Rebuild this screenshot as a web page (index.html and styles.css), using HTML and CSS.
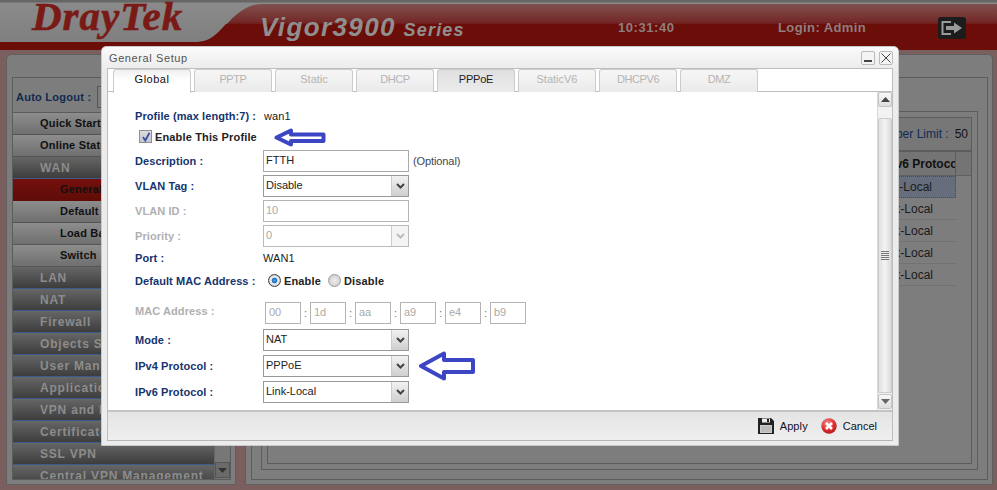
FILE: index.html
```html
<!DOCTYPE html>
<html lang="en">
<head>
<meta charset="utf-8">
<title>DrayTek Vigor3900 Series</title>
<link rel="stylesheet" href="styles.css">
</head>
<body>
<div class="page">
  <header class="header">
    <svg class="header-bg" width="997" height="50" viewBox="0 0 997 50" aria-hidden="true">
      <defs>
        <linearGradient id="red" x1="0" y1="0" x2="0" y2="1">
          <stop offset="0" stop-color="#80504f"/>
          <stop offset=".38" stop-color="#742a28"/>
          <stop offset=".48" stop-color="#6b0e0a"/>
          <stop offset="1" stop-color="#6b0e0a"/>
        </linearGradient>
      </defs>
      <path d="M0 42 H198 C222 42 232 4 262 4 H997 V50 H0 Z" fill="url(#red)"/>
      <path d="M0 42 H198 C210 42 218 33 226 24 H997 V50 H0 Z" fill="#6b0e0a"/>
    </svg>
    <div class="logo">DrayTek</div>
    <div class="model">Vigor3900 <span class="model-series">Series</span></div>
    <div class="clock">10:31:40</div>
    <div class="login">Login: Admin</div>
    <div class="logout">
      <svg width="28" height="22" viewBox="0 0 28 22" aria-hidden="true">
        <rect x="0" y="0" width="28" height="22" rx="3" fill="#1c1c1c"/>
        <path d="M13 5 H4.500 V17 H13" fill="none" stroke="#9a9a9a" stroke-width="2"/>
        <path d="M8 9 H16 V5.500 L24 11 L16 16.500 V13 H8 Z" fill="#9a9a9a"/>
      </svg>
    </div>
  </header>

  <main class="main">
    <aside class="panel side-panel">
      <div class="panel-inner side-inner">
        <div class="auto-logout">
          <span class="auto-label">Auto Logout :</span>
          <span class="auto-select">OFF</span>
        </div>
        <div class="menu-wrap">
          <nav class="menu">
            <div class="menu-item light">Quick Start Wizard</div>
            <div class="menu-item light">Online Status</div>
            <div class="menu-item dark">WAN</div>
            <div class="menu-item sub active">General Setup</div>
            <div class="menu-item sub light">Default Route</div>
            <div class="menu-item sub light">Load Balance</div>
            <div class="menu-item sub light">Switch</div>
            <div class="menu-item dark">LAN</div>
            <div class="menu-item dark">NAT</div>
            <div class="menu-item dark">Firewall</div>
            <div class="menu-item dark">Objects Setting</div>
            <div class="menu-item dark">User Management</div>
            <div class="menu-item dark">Applications</div>
            <div class="menu-item dark">VPN and Remote</div>
            <div class="menu-item dark">Certificate</div>
            <div class="menu-item dark">SSL VPN</div>
            <div class="menu-item dark">Central VPN Management</div>
          </nav>
          <div class="menu-scroll">
            <span class="menu-scroll-btn">
              <svg width="9" height="5" viewBox="0 0 9 5" aria-hidden="true"><path d="M0 0 H9 L4.500 5 Z" fill="#333"/></svg>
            </span>
          </div>
        </div>
      </div>
    </aside>

    <section class="panel content-panel">
      <div class="panel-inner content-inner">
        <div class="frame-a">
          <div class="frame-b">
            <div class="toolbar"><span class="limit-label">Member Limit :</span><span class="limit-value">50</span></div>
            <div class="table-head">
              <div class="head-cell"><span>IPv6 Protocol</span></div>
              <div class="head-end"></div>
            </div>
            <div class="table-row selected"><span>Link-Local</span></div>
            <div class="table-row"><span>Link-Local</span></div>
            <div class="table-row"><span>Link-Local</span></div>
            <div class="table-row"><span>Link-Local</span></div>
            <div class="table-row"><span>Link-Local</span></div>
          </div>
        </div>
      </div>
    </section>
  </main>

  <div class="dialog">
    <div class="title-bar">
      <span class="title">General Setup</span>
      <span class="win-btns">
        <span class="win-btn"><svg width="10" height="10" viewBox="0 0 10 10" aria-hidden="true"><rect x="1" y="7" width="8" height="2" fill="#444"/></svg></span>
        <span class="win-btn"><svg width="12" height="12" viewBox="0 0 12 12" aria-hidden="true"><path d="M1.500 1.500 L10.500 10.500 M10.500 1.500 L1.500 10.500" stroke="#444" stroke-width="1"/></svg></span>
      </span>
    </div>
    <div class="dialog-frame">
      <div class="tabs">
        <div class="tab tab-active">Global</div>
        <div class="tab tab-caps">PPTP</div>
        <div class="tab">Static</div>
        <div class="tab tab-caps">DHCP</div>
        <div class="tab tab-on">PPPoE</div>
        <div class="tab">StaticV6</div>
        <div class="tab tab-caps">DHCPV6</div>
        <div class="tab tab-caps">DMZ</div>
      </div>
      <div class="dialog-body">
        <form class="form">
          <div class="row row-profile"><span class="label">Profile (max length:7) :</span><span class="value value-name">wan1</span></div>
          <div class="row row-enable">
            <span class="check"><svg width="10" height="10" viewBox="0 0 10 10" aria-hidden="true"><path d="M2 5 L4.300 8.500 L8.500 .8" fill="none" stroke="#3c4f9c" stroke-width="1.800"/></svg></span>
            <span class="strong">Enable This Profile</span>
            <svg class="arrow arrow-top" width="52" height="19" viewBox="0 0 52 19" aria-hidden="true"><path d="M2.500 9.500 L17 2.500 V6.500 H49.500 V13 H17 V16.500 Z" fill="#fff" stroke="#3c46c4" stroke-width="4" stroke-linejoin="round"/></svg>
          </div>
          <div class="row"><span class="label">Description :</span><span class="input">FTTH</span><span class="hint">(Optional)</span></div>
          <div class="row"><span class="label">VLAN Tag :</span><span class="select"><span class="select-text">Disable</span><span class="select-btn"><svg width="9" height="6" viewBox="0 0 9 6" aria-hidden="true"><path d="M1 1 L4.500 4.500 L8 1" fill="none" stroke="#444" stroke-width="2"/></svg></span></span></div>
          <div class="row"><span class="label off">VLAN ID :</span><span class="input input-off">10</span></div>
          <div class="row"><span class="label off">Priority :</span><span class="select select-off"><span class="select-text">0</span><span class="select-btn"><svg width="9" height="6" viewBox="0 0 9 6" aria-hidden="true"><path d="M1 1 L4.500 4.500 L8 1" fill="none" stroke="#bbb" stroke-width="2"/></svg></span></span></div>
          <div class="row row-port"><span class="label">Port :</span><span class="value">WAN1</span></div>
          <div class="row row-mac">
            <span class="label">Default MAC Address :</span>
            <span class="radio radio-on"></span><span class="strong radio-text">Enable</span>
            <span class="radio"></span><span class="strong">Disable</span>
          </div>
          <div class="row row-addr">
            <span class="label off">MAC Address :</span>
            <span class="octets">
              <span class="input input-off octet">00</span><span class="colon">:</span>
              <span class="input input-off octet">1d</span><span class="colon">:</span>
              <span class="input input-off octet">aa</span><span class="colon">:</span>
              <span class="input input-off octet">a9</span><span class="colon">:</span>
              <span class="input input-off octet">e4</span><span class="colon">:</span>
              <span class="input input-off octet">b9</span>
            </span>
          </div>
          <div class="row row-select"><span class="label">Mode :</span><span class="select"><span class="select-text">NAT</span><span class="select-btn"><svg width="9" height="6" viewBox="0 0 9 6" aria-hidden="true"><path d="M1 1 L4.500 4.500 L8 1" fill="none" stroke="#444" stroke-width="2"/></svg></span></span></div>
          <div class="row row-select">
            <span class="label">IPv4 Protocol :</span><span class="select"><span class="select-text">PPPoE</span><span class="select-btn"><svg width="9" height="6" viewBox="0 0 9 6" aria-hidden="true"><path d="M1 1 L4.500 4.500 L8 1" fill="none" stroke="#444" stroke-width="2"/></svg></span></span>
            <svg class="arrow arrow-mid" width="58" height="30" viewBox="0 0 58 30" aria-hidden="true"><path d="M3 15 L26 2.500 V9 H55 V21 H26 V27.500 Z" fill="#fff" stroke="#3c46c4" stroke-width="4" stroke-linejoin="round"/></svg>
          </div>
          <div class="row row-select"><span class="label">IPv6 Protocol :</span><span class="select"><span class="select-text">Link-Local</span><span class="select-btn"><svg width="9" height="6" viewBox="0 0 9 6" aria-hidden="true"><path d="M1 1 L4.500 4.500 L8 1" fill="none" stroke="#444" stroke-width="2"/></svg></span></span></div>
        </form>
        <div class="scrollbar">
          <span class="scroll-btn"><svg width="9" height="5" viewBox="0 0 9 5" aria-hidden="true"><path d="M0 5 H9 L4.500 0 Z" fill="#444"/></svg></span>
          <span class="scroll-thumb"><svg width="8" height="9" viewBox="0 0 8 9" aria-hidden="true"><path d="M0 .5 H8 M0 2.500 H8 M0 4.500 H8 M0 6.500 H8 M0 8.500 H8" stroke="#777"/></svg></span>
          <span class="scroll-btn"><svg width="9" height="5" viewBox="0 0 9 5" aria-hidden="true"><path d="M0 0 H9 L4.500 5 Z" fill="#666"/></svg></span>
        </div>
      </div>
      <div class="dialog-foot">
        <svg class="foot-icon" width="16" height="16" viewBox="0 0 16 16" aria-hidden="true">
          <path d="M0 0 H13 L16 3 V16 H0 Z" fill="#222"/>
          <rect x="4" y="0.500" width="8" height="4" fill="#eee"/>
          <rect x="9" y="1" width="2" height="3" fill="#222"/>
          <rect x="2" y="7" width="12" height="8" fill="#ccc"/>
          <path d="M3 9 H13 M3 11 H13 M3 13 H13" stroke="#aaa"/>
        </svg>
        <span class="foot-text foot-apply">Apply</span>
        <svg class="foot-icon" width="16" height="16" viewBox="0 0 16 16" aria-hidden="true">
          <defs><radialGradient id="cx" cx=".4" cy=".3" r=".8"><stop offset="0" stop-color="#f28a8a"/><stop offset=".6" stop-color="#d92b2b"/><stop offset="1" stop-color="#a81818"/></radialGradient></defs>
          <circle cx="8" cy="8" r="7.700" fill="url(#cx)"/>
          <path d="M5 5 L11 11 M11 5 L5 11" stroke="#fff" stroke-width="2.600"/>
        </svg>
        <span class="foot-text foot-cancel">Cancel</span>
      </div>
    </div>
  </div>
</div>
</body>
</html>
```
FILE: styles.css
```css
* { box-sizing: border-box; }
html, body { margin: 0; padding: 0; }
body {
  width: 997px;
  height: 490px;
  overflow: hidden;
  font-family: "Liberation Sans", Arial, sans-serif;
  font-size: 11px;
  background: #7b5e5e;
}
.page { position: relative; width: 997px; height: 490px; overflow: hidden; }

/* Header */
.header {
  position: relative;
  height: 50px;
  display: flex;
  background: linear-gradient(#666 0, #666 2px, #8a8a8a 3px, #7f7f7f 42px);
}
.header-bg { position: absolute; left: 0; top: 0; }
.logo {
  position: relative;
  margin-left: 32px;
  width: 228px;
  height: 32px;
  font: italic bold 41px/32px "Liberation Serif", serif;
  letter-spacing: 1px;
  -webkit-text-stroke: .6px #7a1a16;
  color: #7a1a16;
}
.model {
  position: relative;
  margin-top: 13px;
  width: 358px;
  font: italic bold 26px/28px "Liberation Sans", sans-serif;
  letter-spacing: 1.4px;
  color: #8f8f8f;
  white-space: nowrap;
}
.model-series { font-size: 18px; letter-spacing: 1.2px; margin-left: -1px; }
.clock, .login {
  position: relative;
  margin-top: 20px;
  font-weight: bold;
  font-size: 13px;
  line-height: 15px;
  color: #8d7f7f;
}
.clock { width: 160px; letter-spacing: .55px; }
.login { width: 160px; letter-spacing: .4px; }
.logout { position: relative; margin-top: 17px; height: 22px; }
.logout svg { display: block; }

/* Background panels */
.main { display: flex; height: 440px; padding: 4px 4px 5px 6px; gap: 9px; }
.panel {
  border: 1px solid #5f5f5f;
  border-radius: 5px 5px 0 0;
  background: #7d7d7d;
  padding: 22px 4px 4px 5px;
}
.side-panel { width: 230px; }
.content-panel { width: 748px; }
.panel-inner { height: 100%; border: 1px solid #5c5c5c; background: #7d7d7d; }
.side-inner { display: flex; flex-direction: column; }
.auto-logout { height: 35px; display: flex; align-items: center; padding: 4px 0 0 3px; border-bottom: 1px solid #5c5c5c; }
.auto-label { font-weight: bold; font-size: 11px; color: #112a50; letter-spacing: .25px; margin-right: 6px; }
.auto-select { border: 1px solid #555; padding: 2px 4px; width: 60px; height: 22px; }
.menu-wrap { display: flex; flex: 1; min-height: 0; overflow: hidden; }
.menu { width: 201px; flex: none; }
.menu-item {
  height: 22px;
  padding: 3px 0 0 27px;
  font-weight: bold;
  font-size: 12px;
  line-height: 15px;
  letter-spacing: .3px;
  white-space: nowrap;
}
.menu-item.sub { padding-left: 47px; }
.menu-item.light { background: linear-gradient(#8d8d8d, #6f6f6f); color: #111; border-bottom: 1px solid #555; font-size: 11px; letter-spacing: .2px; }
.menu-item.dark { background: linear-gradient(#666, #3d3d3d); color: #8c8c8c; border-bottom: 1px solid #3c5a8c; letter-spacing: .8px; padding-top: 4px; }
.menu-item.active { background: linear-gradient(#74100c, #5f0c08); color: #111; font-size: 11px; letter-spacing: .2px; }
.menu-scroll { flex: 1; background: #777; border-left: 1px solid #666; display: flex; flex-direction: column; justify-content: flex-end; }
.menu-scroll-btn { height: 16px; width: 15px; border: 1px solid #555; background: #6a6a6a; display: flex; align-items: center; justify-content: center; margin-bottom: 1px; }
.content-inner { padding: 33px 9px 9px 9px; }
.frame-a { height: 100%; border: 1px solid #5c5c5c; padding: 5px; }
.frame-b { height: 100%; border: 1px solid #5c5c5c; }
.toolbar {
  height: 34px;
  display: flex;
  justify-content: flex-end;
  align-items: center;
  gap: 6px;
  padding-right: 3px;
  border-bottom: 2px solid #5c5c5c;
  background: #777;
  color: #0f2a55;
  font-size: 12px;
}
.limit-value { color: #111; }
.table-head { display: flex; height: 24px; border-bottom: 1px solid #606060; background: #747474; }
.head-cell { flex: none; width: 688px; overflow: hidden; display: flex; justify-content: flex-end; align-items: center; border-right: 1px solid #5c5c5c; font: bold 12px "Liberation Sans", sans-serif; color: #111; white-space: nowrap; }
.head-cell span { margin-right: -6px; }
.head-end { flex: 1; }
.table-row { width: 688px; height: 22px; display: flex; justify-content: flex-end; align-items: center; padding-right: 23px; border-bottom: 1px solid #727272; font-size: 12px; color: #1a1a1a; }
.table-row.selected { background: #666d7c; border: 1px dotted #3f4a66; }

/* Dialog */
.dialog {
  position: absolute;
  left: 101px;
  top: 46px;
  width: 798px;
  height: 400px;
  padding: 0 5px 4px;
  border: 1px solid #c8c8c8;
  border-radius: 5px 5px 0 0;
  background: linear-gradient(#fafafa, #ececec 22px);
  display: flex;
  flex-direction: column;
}
.title-bar { height: 21px; flex: none; display: flex; justify-content: space-between; align-items: center; }
.title { margin-left: 2px; font-size: 11px; letter-spacing: .6px; color: #555; }
.win-btns { display: flex; gap: 4px; margin-top: 1px; }
.win-btn { width: 14px; height: 14px; border: 1px solid #bbb; border-radius: 2px; background: #f4f4f4; display: flex; align-items: center; justify-content: center; }
.dialog-frame { flex: 1; min-height: 0; display: flex; flex-direction: column; background: #fff; border: 1px solid #bdbdbd; border-bottom-color: #b5b5b5; }
.tabs { height: 23px; flex: none; display: flex; gap: 3px; padding-left: 5px; border-bottom: 1px solid #bdbdbd; }
.tab {
  width: 78px;
  height: 23px;
  padding-bottom: 5px;
  display: flex;
  align-items: center;
  justify-content: center;
  border: 1px solid #ccc;
  border-bottom: 0;
  border-radius: 3px 3px 0 0;
  background: linear-gradient(#f6f6f6, #eaeaea);
  color: #b4b4b4;
  font-size: 11px;
}
.tab-caps { letter-spacing: -.4px; }
.tab-active { height: 24px; padding-bottom: 6px; background: linear-gradient(#f0f0f0, #fff 10px); color: #111; position: relative; z-index: 1; letter-spacing: .5px; }
.tab-on { background: linear-gradient(#dfdfdf, #ececec); color: #222; letter-spacing: -.2px; }
.dialog-body { flex: 1; min-height: 0; display: flex; justify-content: space-between; }
.form { padding: 13px 0 0 27px; flex: 1; }
.row { height: 25px; display: flex; align-items: center; position: relative; white-space: nowrap; }
.row-profile { height: 22px; }
.row-enable { height: 19px; margin-bottom: 2px; padding-left: 4px; }
.row-port { height: 20px; }
.row-mac { height: 25px; margin-bottom: 2px; }
.row-addr { height: 32px; }
.row-select { height: 26px; }
.label { width: 128px; flex: none; color: #15346e; font-weight: bold; font-size: 11px; letter-spacing: .08px; }
.label.off { color: #b0b0b0; }
.value { color: #222; font-size: 11px; letter-spacing: .1px; }
.value-name { margin-left: 1px; }
.strong { font-weight: bold; font-size: 11px; color: #222; letter-spacing: .15px; }
.hint { margin-left: 4px; color: #445; letter-spacing: -.1px; }
.check { width: 13px; height: 13px; margin-right: 3px; border: 1px solid #8f8f8f; background: linear-gradient(#dcdcdc, #c4c8d4); display: flex; align-items: center; justify-content: center; }
.arrow { position: absolute; }
.arrow-top { left: 139px; top: 1px; }
.arrow-mid { left: 283px; top: -2px; }
.input { width: 146px; height: 22px; padding: 0 2px 2px; border: 1px solid #aaa; color: #222; font-size: 11px; display: flex; align-items: center; }
.input-off { color: #aaa; border-color: #b4b4b4; }
.select { width: 146px; height: 22px; display: flex; border: 1px solid #999; color: #222; }
.select-off { border-color: #bbb; color: #aaa; }
.select-text { flex: 1; padding: 0 0 2px 2px; display: flex; align-items: center; font-size: 11px; }
.select-btn { width: 17px; border-left: 1px solid #ccc; background: linear-gradient(#f2f2f2, #cfcfcf); display: flex; align-items: center; justify-content: center; }
.select-off .select-btn { background: #f4f4f4; }
.radio { width: 13px; height: 13px; margin-right: 3px; border-radius: 50%; border: 1px solid #999; background: radial-gradient(circle, #eee, #c8c8c8); }
.radio-on { margin-left: 5px; background: radial-gradient(circle, #5aa4dc 0, #1f6fb8 30%, #eef2f6 42%, #dfe3e8 60%, #5f6670 100%); border-color: #444; }
.radio-text { margin-right: 7px; }
.octets { display: flex; align-items: center; margin-left: 2px; margin-top: 3px; }
.octet { width: 36px; padding-left: 3px; }
.colon { width: 9px; text-align: center; color: #775; }
.scrollbar { width: 15px; flex: none; display: flex; flex-direction: column; border-left: 1px solid #d8d8d8; background: #f2f2f2; padding: 0 0 1px; }
.scroll-btn { height: 15px; flex: none; border: 1px solid #c4c4c4; border-radius: 2px; background: linear-gradient(#f8f8f8, #dedede); display: flex; align-items: center; justify-content: center; }
.scroll-thumb { flex: 1; margin: 11px 0 1px; border: 1px solid #ccc; border-radius: 2px 2px 0 0; background: linear-gradient(90deg, #e0e0e0, #f4f4f4 50%, #dadada); display: flex; align-items: center; justify-content: center; }
.dialog-foot { height: 30px; flex: none; display: flex; align-items: center; justify-content: flex-end; padding-right: 15px; border-top: 2px solid #c4c4c4; background: linear-gradient(#e4e4e4, #efefef); }
.foot-text { font-size: 11px; color: #112; }
.foot-apply { margin: 0 13px 0 6px; letter-spacing: .1px; }
.foot-cancel { margin-left: 6px; }
```
